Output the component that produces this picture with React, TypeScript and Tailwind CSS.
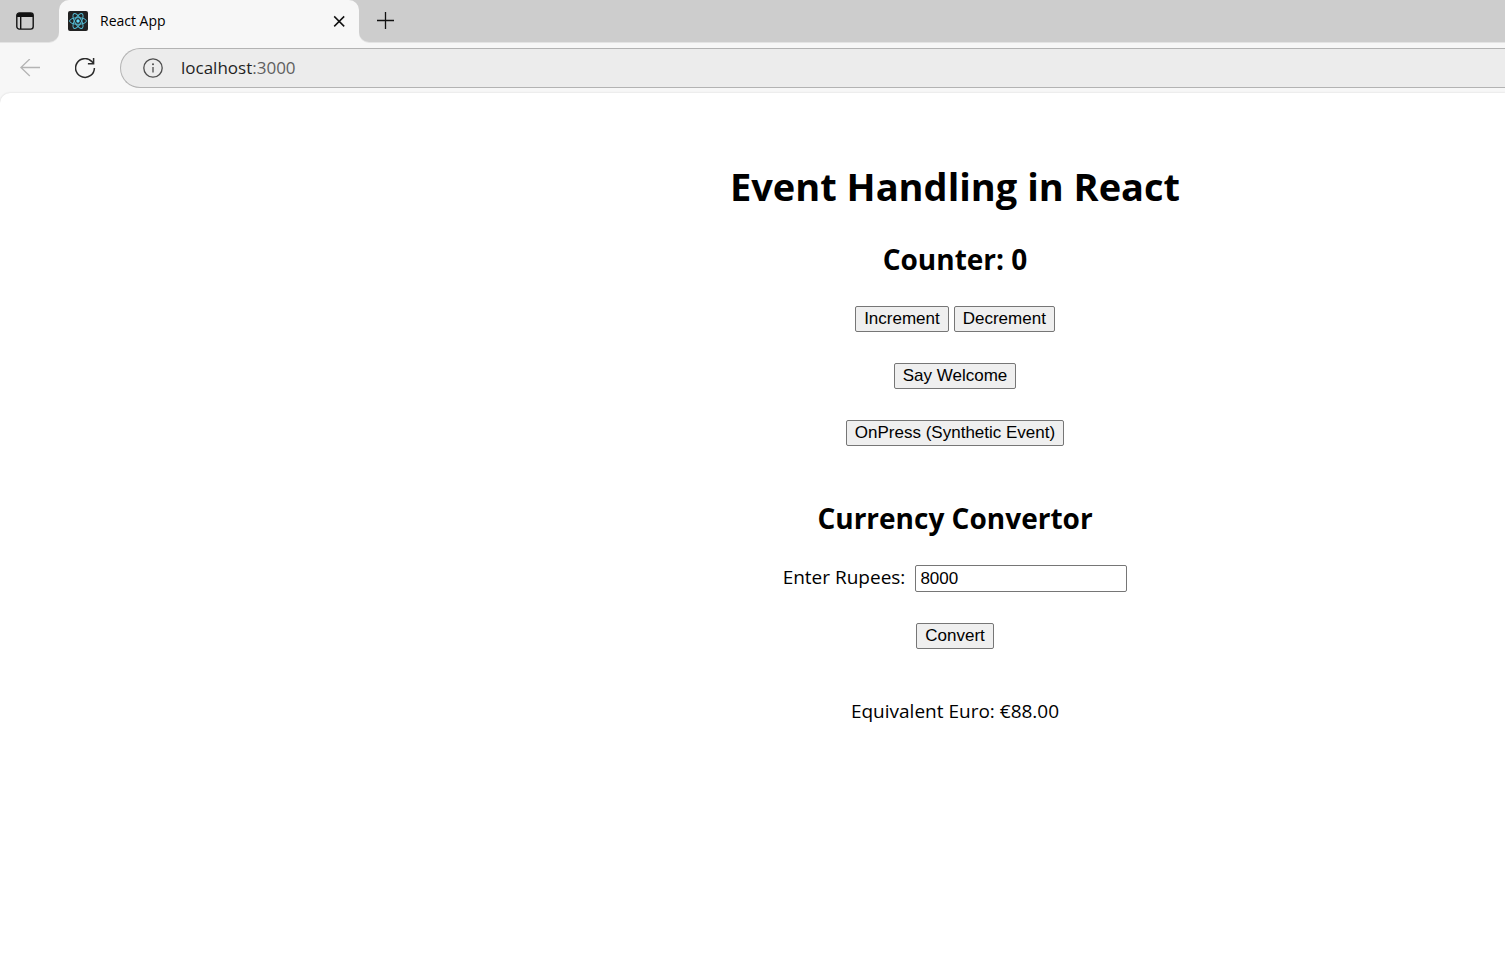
import { useState, type ReactNode } from "react";

function ReactLogo() {
  return (
    <svg viewBox="0 0 20 20" className="size-5 shrink-0" aria-hidden="true">
      <rect width="20" height="20" rx="2" fill="#222" />
      <g fill="none" stroke="#53b9d1" strokeWidth="1">
        <ellipse cx="10" cy="10" rx="8.4" ry="3.3" />
        <ellipse cx="10" cy="10" rx="8.4" ry="3.3" transform="rotate(60 10 10)" />
        <ellipse cx="10" cy="10" rx="8.4" ry="3.3" transform="rotate(120 10 10)" />
      </g>
      <circle cx="10" cy="10" r="1.7" fill="#61dafb" />
    </svg>
  );
}

function TabBar() {
  return (
    <div className="flex h-[43px] pb-px">
      <div className="flex w-[59px] shrink-0 items-center rounded-br-[10px] bg-[#cdcdcd] pl-4 shadow-[0_1px_0_#e4e4e4]">
        <button type="button" aria-label="Tab actions">
          <svg viewBox="0 0 18 18" className="size-[18px]" fill="none" stroke="#111" strokeWidth="1.4" aria-hidden="true">
            <rect x="0.8" y="0.9" width="16.4" height="16.2" rx="2.6" />
            <path d="M1 3.5A2.5 2.5 0 0 1 3.5 1h11A2.5 2.5 0 0 1 17 3.5V5H1z" fill="#111" stroke="none" />
            <path d="M4.7 5v12" />
          </svg>
        </button>
      </div>
      <div className="flex w-[300px] shrink-0 items-center gap-3 bg-[#cdcdcd]">
        <div className="flex h-full w-full items-center gap-3 rounded-t-[10px] bg-[#f7f7f7] px-[9px]">
          <ReactLogo />
          <span className="grow text-sm text-black">React App</span>
          <button type="button" aria-label="Close tab" className="flex size-[22px] items-center justify-center">
            <svg viewBox="0 0 12 12" className="size-3" stroke="#111" strokeWidth="1.5" aria-hidden="true">
              <path d="M1.2 1.4l10 10M11.2 1.4l-10 10" />
            </svg>
          </button>
        </div>
      </div>
      <div className="flex grow items-center rounded-bl-[10px] bg-[#cdcdcd] pl-[18px] shadow-[0_1px_0_#e4e4e4]">
        <button type="button" aria-label="New tab">
          <svg viewBox="0 0 18 18" className="size-[18px]" stroke="#111" strokeWidth="1.3" aria-hidden="true">
            <path d="M8.5 0v17M0 8.5h17" />
          </svg>
        </button>
      </div>
    </div>
  );
}

function Toolbar() {
  return (
    <div className="flex h-[50px] items-center">
      <button type="button" aria-label="Back" className="ml-5" disabled>
        <svg viewBox="0 0 20 18" className="h-[18px] w-5" fill="none" stroke="#b4b4b4" strokeWidth="1.3" aria-hidden="true">
          <path d="M20 8.5H.8M9.8 0L.9 8.5l8.9 8.5" />
        </svg>
      </button>
      <button type="button" aria-label="Refresh" className="ml-[35px]">
        <svg viewBox="0 0 21 21" className="size-[21px]" fill="none" stroke="#2b2b2b" strokeWidth="1.5" aria-hidden="true">
          <path d="M19.4 10a9.4 9.4 0 1 1-2.7-6.6l1.8 1.8" />
          <path d="M18.6 0v5.7h-5.7" />
        </svg>
      </button>
      <div className="ml-6 flex h-10 grow items-center gap-[18px] rounded-l-full border-y border-l border-[#b3b3b3] bg-[#ececec] pl-[22px]">
        <svg viewBox="0 0 20 20" className="size-5 shrink-0" fill="none" stroke="#4d4d4d" strokeWidth="1.3" aria-hidden="true">
          <circle cx="10" cy="10" r="9.2" />
          <path d="M10 9v5.5" />
          <circle cx="10" cy="6.3" r="1" fill="#4d4d4d" stroke="none" />
        </svg>
        <span className="text-[17px] text-[#5f5f5f]">
          <span className="text-[#1f1f1f]">localhost</span>:3000
        </span>
      </div>
    </div>
  );
}

function PushButton({ onClick, children }: { onClick: () => void; children: ReactNode }) {
  return (
    <button
      type="button"
      onClick={onClick}
      className="h-[26px] rounded-[2px] border border-[#767676] bg-[#efefef] px-2 font-['Liberation_Sans',Arial,sans-serif] text-[17px] leading-6"
    >
      {children}
    </button>
  );
}

export default function App() {
  const [count, setCount] = useState(0);
  const [rupees, setRupees] = useState("8000");
  const [euro, setEuro] = useState("88.00");
  const [message, setMessage] = useState("");

  return (
    <div className="flex min-h-screen flex-col bg-[#f7f7f7] font-['Open_Sans','Noto_Sans',sans-serif] text-black">
      <TabBar />
      <Toolbar />
      <main className="flex grow flex-col items-center rounded-tl-[10px] bg-white pt-[67px] pl-[405px] shadow-[0_0_2px_#d0d0d0]">
        <h1 className="text-[38px] leading-[52px] font-bold">Event Handling in React</h1>
        <h2 className="mt-[27px] text-[28px] leading-10 font-bold">Counter: {count}</h2>
        <div className="mt-[27px] flex gap-[5px]">
          <PushButton onClick={() => setCount(count + 1)}>Increment</PushButton>
          <PushButton onClick={() => setCount(count - 1)}>Decrement</PushButton>
        </div>
        <div className="mt-[31px] flex">
          <PushButton onClick={() => setMessage("Welcome!")}>Say Welcome</PushButton>
        </div>
        <div className="mt-[31px] flex">
          <PushButton onClick={() => setMessage("I was clicked")}>OnPress (Synthetic Event)</PushButton>
        </div>
        <h2 className="mt-[52px] text-[28px] leading-10 font-bold">Currency Convertor</h2>
        <div className="mt-[27px] flex items-start gap-[10px]">
          <label htmlFor="rupees" className="text-[19px] leading-6">
            Enter Rupees:
          </label>
          <input
            id="rupees"
            value={rupees}
            onChange={(e) => setRupees(e.target.value)}
            className="h-[27px] w-[212px] rounded-[2px] border border-[#767676] bg-white px-1 font-['Liberation_Sans',Arial,sans-serif] text-[17px]"
          />
        </div>
        <div className="mt-[31px] flex">
          <PushButton onClick={() => setEuro((Number(rupees) * 0.011).toFixed(2))}>Convert</PushButton>
        </div>
        <p className="mt-[50px] text-[19px] leading-6">Equivalent Euro: €{euro}</p>
        {message && <p role="status">{message}</p>}
      </main>
    </div>
  );
}
